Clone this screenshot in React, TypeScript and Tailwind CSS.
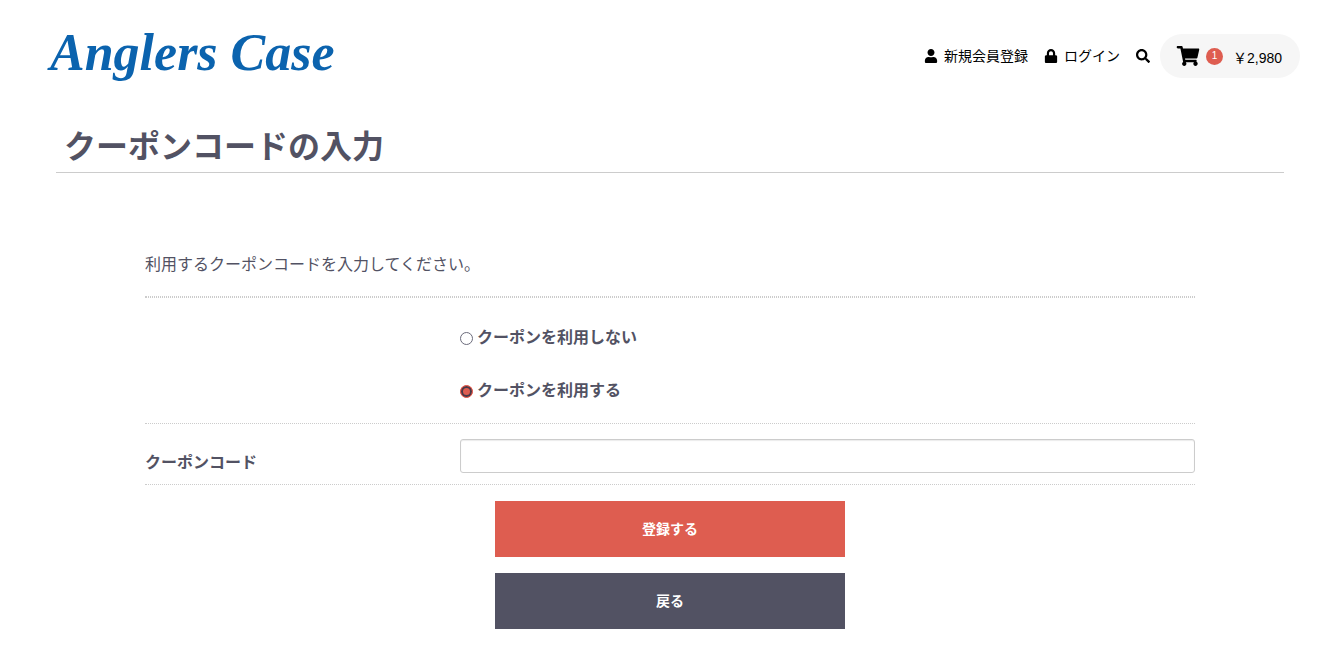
import { useState } from 'react'
import { FaLock, FaSearch, FaShoppingCart, FaUser } from 'react-icons/fa'

const cart = { count: 1, total: '2,980' }

const couponOptions = [
  { value: 'no', label: 'クーポンを利用しない' },
  { value: 'yes', label: 'クーポンを利用する' },
]

function Header() {
  return (
    <header className="flex items-start justify-between pt-7">
      <a href="#" className="ml-2.5 font-['Liberation_Serif',serif] text-[52px] leading-[50px] font-bold italic text-[#0b63ae]">
        Anglers Case
      </a>
      <nav className="flex items-center pt-1.5 text-sm leading-5 text-black">
        <a href="#" className="mr-4 flex items-center gap-1.5">
          <FaUser className="w-3.5" />
          新規会員登録
        </a>
        <a href="#" className="mr-4 flex items-center gap-1.5">
          <FaLock className="w-3.5" />
          ログイン
        </a>
        <button type="button" aria-label="検索" className="mr-2.5">
          <FaSearch />
        </button>
        <a href="#" className="flex h-11 w-[140px] items-center rounded-full bg-[#f6f6f6] pl-4">
          <FaShoppingCart className="h-5 w-6" />
          <span className="mr-2.5 ml-1.5 flex size-[17px] items-center justify-center rounded-full bg-[#de5d50] text-[10px] text-white">
            {cart.count}
          </span>
          <span className="pt-1 whitespace-nowrap">￥{cart.total}</span>
        </a>
      </nav>
    </header>
  )
}

export default function App() {
  const [useCoupon, setUseCoupon] = useState('yes')
  const [code, setCode] = useState('')

  return (
    <div className="min-h-screen bg-white pr-[25px] pb-7 pl-10 font-['Liberation_Sans','Noto_Sans_CJK_JP',sans-serif] text-base text-[#525263]">
      <Header />

      <main>
        <h1 className="mx-4 mt-10 border-b border-[#ccc] px-2 pt-2 pb-1 text-[32px] leading-[42px] font-bold">
          クーポンコードの入力
        </h1>

        <form className="mx-auto mt-20 w-10/12" onSubmit={(e) => e.preventDefault()}>
          <p className="pb-[19px] leading-6">利用するクーポンコードを入力してください。</p>

          {/* クーポンの利用有無 */}
          <div className="border-t border-dotted border-[#ccc]">
            <div className="flex flex-col gap-[29px] border-y border-dotted border-[#ccc] pt-7 pb-5 pl-[30%]">
              {couponOptions.map((option) => (
                <label key={option.value} className="flex items-center gap-1 leading-6 font-bold">
                  <input
                    type="radio"
                    name="use_coupon"
                    value={option.value}
                    checked={useCoupon === option.value}
                    onChange={() => setUseCoupon(option.value)}
                    className="size-[13px] appearance-none rounded-full border border-[#6b6b7b] bg-white checked:border-[#de4d40] checked:bg-[#de5d50] checked:inset-ring-2 checked:inset-ring-[#4a3a48]"
                  />
                  {option.label}
                </label>
              ))}
            </div>
          </div>

          {/* クーポンコードの入力欄 */}
          <div className="flex items-start border-b border-dotted border-[#ccc] pt-[15px] pb-[9px]">
            <label htmlFor="coupon" className="w-[30%] pt-3 leading-6 font-bold">
              クーポンコード
            </label>
            <input
              id="coupon"
              type="text"
              value={code}
              onChange={(e) => setCode(e.target.value)}
              className="h-[34px] flex-1 rounded-[3px] border border-[#ccc] px-2 shadow-[inset_0_1px_1px_rgba(0,0,0,0.08)]"
            />
          </div>

          <div className="mx-auto mt-4 flex w-1/3 flex-col gap-4 text-sm font-bold text-white">
            <button type="submit" className="h-14 bg-[#de5d50]">
              登録する
            </button>
            <button type="button" className="h-14 bg-[#525263]">
              戻る
            </button>
          </div>
        </form>
      </main>
    </div>
  )
}
